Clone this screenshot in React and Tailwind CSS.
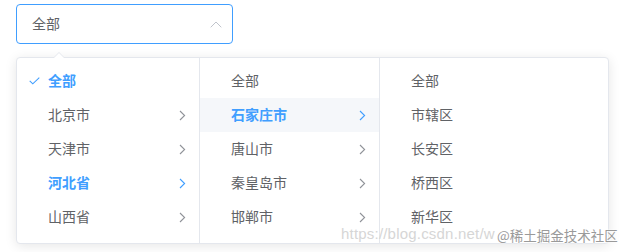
import React from 'react';

const font = { fontFamily: '"Helvetica Neue", Arial, "Noto Sans CJK SC", sans-serif' };

const col1 = [
  { label: '全部', checked: true, active: true },
  { label: '北京市', arrow: true },
  { label: '天津市', arrow: true },
  { label: '河北省', arrow: true, active: true },
  { label: '山西省', arrow: true },
];

const col2 = [
  { label: '全部' },
  { label: '石家庄市', arrow: true, active: true, hover: true },
  { label: '唐山市', arrow: true },
  { label: '秦皇岛市', arrow: true },
  { label: '邯郸市', arrow: true },
];

const col3 = [{ label: '全部' }, { label: '市辖区' }, { label: '长安区' }, { label: '桥西区' }, { label: '新华区' }];

const Chevron = ({ color }) => (
  <svg width="7" height="11" viewBox="0 0 7 11" className="ml-auto mr-[13px]">
    <path d="M1 1 L5.6 5.5 L1 10" fill="none" stroke={color} strokeWidth="1.1" />
  </svg>
);

const Check = () => (
  <svg width="11" height="8" viewBox="0 0 11 8" className="absolute left-[12px] top-1/2 -translate-y-1/2">
    <path d="M0.7 3.8 L3.8 6.8 L10.3 0.7" fill="none" stroke="#409EFF" strokeWidth="1.1" />
  </svg>
);

const Menu = ({ items, className }) => (
  <ul className={`py-[6px] ${className}`}>
    {items.map((it) => (
      <li
        key={it.label}
        className={`relative flex h-[34px] items-center pl-[31px] text-[14px] ${
          it.active ? 'font-bold text-[#409EFF]' : 'text-[#606266]'
        } ${it.hover ? 'bg-[#F5F7FA]' : ''}`}
      >
        {it.checked && <Check />}
        <span>{it.label}</span>
        {it.arrow && <Chevron color={it.active ? '#409EFF' : '#909399'} />}
      </li>
    ))}
  </ul>
);

export default function App() {
  return (
    <div className="relative h-[252px] w-[624px] overflow-hidden bg-white pl-[16px] pt-[4px]" style={font}>
      <div className="flex h-[40px] w-[217px] items-center justify-between rounded-[4px] border border-[#409EFF] pl-[15px] pr-[10px] text-[14px] text-[#606266]">
        <span>全部</span>
        <svg width="12" height="7" viewBox="0 0 12 7">
          <path d="M0.7 6.3 L6 1 L11.3 6.3" fill="none" stroke="#C0C4CC" strokeWidth="1" />
        </svg>
      </div>

      <div className="relative mt-[13px] flex h-[187px] w-[593px] rounded-[4px] border border-[#E4E7ED] bg-white shadow-[0_2px_12px_0_rgba(0,0,0,0.1)]">
        <div className="absolute -top-[6px] left-[36px] h-0 w-0 border-x-[6px] border-b-[6px] border-x-transparent border-b-[#E4E7ED]" />
        <div className="absolute -top-[5px] left-[36px] h-0 w-0 border-x-[6px] border-b-[6px] border-x-transparent border-b-white" />
        <Menu items={col1} className="w-[183px] border-r border-[#E4E7ED]" />
        <Menu items={col2} className="w-[180px] border-r border-[#E4E7ED]" />
        <Menu items={col3} className="flex-1" />
      </div>

      <div className="pointer-events-none absolute left-[341px] top-[223px] text-[15px] tracking-[0.2px] text-[#d6d6d6]" style={{ fontFamily: '"Liberation Sans", sans-serif' }}>
        https://blog.csdn.net/w
      </div>
      <div
        className="pointer-events-none absolute left-[497px] top-[225px] text-[13.5px] text-[#9a9a9a]"
        style={{ fontFamily: '"Noto Sans CJK SC", sans-serif', textShadow: '0 0 2px #fff, 0 0 2px #fff' }}
      >
        @稀土掘金技术社区
      </div>
    </div>
  );
}
